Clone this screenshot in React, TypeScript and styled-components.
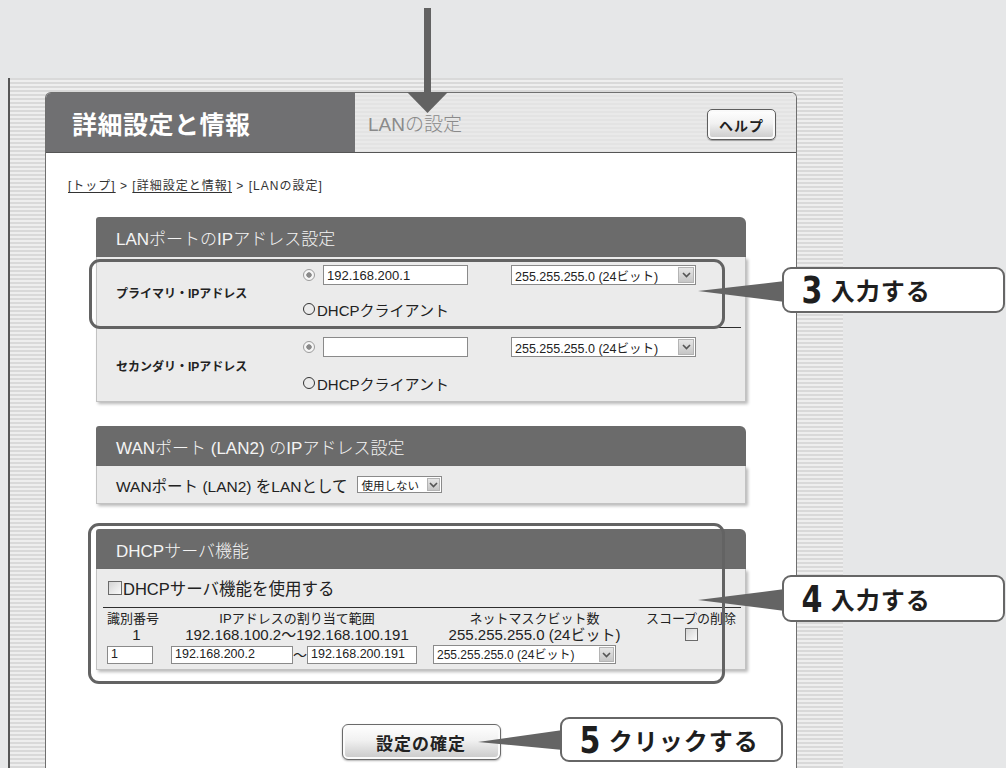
import styled, { createGlobalStyle } from 'styled-components';

const FONT = `'Liberation Sans', 'Noto Sans CJK JP', sans-serif`;

const GlobalStyle = createGlobalStyle`
  html, body {
    margin: 0;
    padding: 0;
  }
  body {
    width: 1006px;
    height: 768px;
    overflow: hidden;
    background: #e6e7e8;
    font-family: ${FONT};
    color: #222;
  }
`;

const Page = styled.div`
  position: relative;
  width: 1006px;
  height: 768px;
  overflow: hidden;
  padding-top: 78px;
  box-sizing: border-box;
`;

const Frame = styled.div`
  margin-left: 8px;
  width: 835px;
  height: 690px;
  box-sizing: border-box;
  border-left: 2px solid #555;
  padding: 14px 0 0 35px;
  background: repeating-linear-gradient(to bottom, #d9d9d9 0 2px, #eeeeee 2px 4px);
`;

const Panel = styled.div`
  width: 752px;
  height: 100%;
  box-sizing: border-box;
  background: #fff;
  border: 1px solid #6f6f6f;
  border-bottom: none;
  border-radius: 6px 6px 0 0;
  display: flex;
  flex-direction: column;
`;

const Header = styled.header`
  display: flex;
  height: 59px;
  border-bottom: 1px solid #555;
`;

const TitleBlock = styled.div`
  width: 309px;
  box-sizing: border-box;
  padding-left: 26px;
  display: flex;
  align-items: center;
  background: #707072;
  border-top-left-radius: 5px;
  color: #fff;
  font-size: 25px;
  font-weight: bold;
  letter-spacing: 0.5px;
`;

const SubBar = styled.div`
  flex: 1;
  display: flex;
  align-items: center;
  justify-content: space-between;
  padding: 0 20px 0 13px;
  border-top-right-radius: 5px;
  background: repeating-linear-gradient(to bottom, #e9e9e9 0 2px, #e3e3e3 2px 4px);
`;

const PageName = styled.span`
  color: #8a8a8a;
  font-size: 19px;
  font-weight: 300;
`;

const HelpButton = styled.button`
  width: 69px;
  height: 31px;
  margin-top: 4px;
  border: 1px solid #5e5e5e;
  border-radius: 5px;
  background: linear-gradient(#ffffff, #f2f2f2 45%, #c9c9c9);
  box-shadow: inset 0 0 0 2px #fafafa, 0 1px 1px rgba(0, 0, 0, 0.3);
  font-family: ${FONT};
  font-size: 14px;
  font-weight: bold;
  letter-spacing: 1px;
  color: #222;
  padding: 0;
`;

const Content = styled.div`
  display: flex;
  flex-direction: column;
`;

const Breadcrumb = styled.div`
  margin-top: 26px;
  padding-left: 22px;
  font-size: 12px;
  line-height: 14px;
  letter-spacing: 1px;
  color: #333;
`;

const Crumb = styled.span`
  text-decoration: underline;
  text-underline-offset: 2px;
`;

const Sections = styled.div`
  display: flex;
  flex-direction: column;
  width: 650px;
  padding-left: 50px;
  margin-top: 24px;
`;

const Section = styled.section<{ $gap?: number }>`
  position: relative;
  width: 650px;
  margin-top: ${({ $gap }) => $gap ?? 0}px;
`;

const SectionHeader = styled.div`
  height: 40px;
  box-sizing: border-box;
  padding-left: 20px;
  display: flex;
  align-items: center;
  background: #6b6b6b;
  border-radius: 3px 6px 0 0;
  color: #f4f4f4;
  font-size: 17px;
  font-weight: 300;
`;

const SectionBody = styled.div`
  background: #ebebeb;
  border: 1px solid #c2c2c2;
  border-top: none;
  box-shadow: 2px 2px 3px rgba(0, 0, 0, 0.28);
`;

const AddressRow = styled.div`
  display: grid;
  grid-template-columns: 206px 1fr;
  padding: 8px 0;
  margin-right: 4px;
  border-bottom: 1px solid #2e2e2e;

  &:last-child {
    border-bottom: none;
    padding-top: 9px;
    padding-bottom: 8px;
  }
`;

const RowLabel = styled.div`
  align-self: center;
  padding-left: 19px;
  font-size: 12px;
  font-weight: bold;
  color: #222;
`;

const RowFields = styled.div<{ $gap: number }>`
  display: flex;
  flex-direction: column;
  gap: ${({ $gap }) => $gap}px;
`;

const FieldLine = styled.div`
  display: flex;
  align-items: center;
  height: 20px;
  font-size: 15px;
`;

const Radio = styled.span<{ $checked?: boolean }>`
  display: inline-block;
  width: 12px;
  height: 12px;
  border-radius: 50%;
  box-sizing: border-box;
  flex: none;
  border: 1px solid ${({ $checked }) => ($checked ? '#9c9c9c' : '#333')};
  background: ${({ $checked }) =>
    $checked ? 'radial-gradient(circle, #8a8a8a 0 2.4px, #f6f6f6 3px)' : 'transparent'};
  margin-right: ${({ $checked }) => ($checked ? 8 : 2)}px;
`;

const TextInput = styled.div<{ $w: number; $h?: number; $size?: number }>`
  width: ${({ $w }) => $w}px;
  height: ${({ $h }) => $h ?? 20}px;
  box-sizing: border-box;
  border: 1px solid #8a8a8a;
  background: #fff;
  padding-left: 3px;
  display: flex;
  align-items: center;
  font-size: ${({ $size }) => $size ?? 13}px;
  color: #222;
  flex: none;
`;

const SelectBox = styled.div<{ $w: number; $h: number; $size: number; $ml?: number }>`
  width: ${({ $w }) => $w}px;
  height: ${({ $h }) => $h}px;
  margin-left: ${({ $ml }) => $ml ?? 0}px;
  box-sizing: border-box;
  border: 1px solid #8a8a8a;
  background: #fff;
  padding-left: 3px;
  display: flex;
  align-items: center;
  justify-content: space-between;
  font-size: ${({ $size }) => $size}px;
  color: #222;
  flex: none;
`;

const SelectArrow = styled.span<{ $s: number }>`
  width: ${({ $s }) => $s}px;
  height: ${({ $s }) => $s}px;
  margin-right: 1px;
  box-sizing: border-box;
  border: 1px solid #b4b4b4;
  background: linear-gradient(#e6e6e6, #c6c6c6);
  display: flex;
  align-items: center;
  justify-content: center;
`;

function Select({ value, w, h = 20, size = 12.5, ml }: { value: string; w: number; h?: number; size?: number; ml?: number }) {
  return (
    <SelectBox $w={w} $h={h} $size={size} $ml={ml}>
      <span>{value}</span>
      <SelectArrow $s={h - 4}>
        <svg width="9" height="6" viewBox="0 0 9 6">
          <polyline points="1,1 4.5,4.6 8,1" fill="none" stroke="#555" strokeWidth="1.6" />
        </svg>
      </SelectArrow>
    </SelectBox>
  );
}

const WanLine = styled.div`
  height: 37px;
  display: flex;
  align-items: center;
  gap: 10px;
  padding-left: 19px;
  font-size: 15.5px;
`;

const CheckLine = styled.div`
  height: 38px;
  margin: 0 4px 0 6px;
  padding-left: 5px;
  display: flex;
  align-items: center;
  gap: 1px;
  border-bottom: 1px solid #2e2e2e;
  font-size: 16.5px;
`;

const CheckBox = styled.span<{ $s: number }>`
  display: inline-block;
  width: ${({ $s }) => $s}px;
  height: ${({ $s }) => $s}px;
  box-sizing: border-box;
  border: 1px solid #6a6a6a;
  background: linear-gradient(135deg, #d4d4d4, #fafafa);
  flex: none;
`;

const ScopeTable = styled.div`
  padding: 3px 0 5px 10px;
  display: flex;
  flex-direction: column;
`;

const ScopeRow = styled.div<{ $h: number; $mt?: number; $size: number }>`
  display: grid;
  grid-template-columns: 59px 262px 213px 100px;
  height: ${({ $h }) => $h}px;
  margin-top: ${({ $mt }) => $mt ?? 0}px;
  align-items: center;
  font-size: ${({ $size }) => $size}px;
  line-height: 1;
`;

const ScopeCell = styled.div<{ $align?: 'left' | 'center' }>`
  display: flex;
  align-items: center;
  justify-content: ${({ $align }) => ($align === 'left' ? 'flex-start' : 'center')};
`;

const RangeCell = styled.div`
  display: flex;
  align-items: center;
  padding-left: 5px;
  font-size: 14px;
`;

const Highlight = styled.div<{ $top: number; $left: number; $w: number; $h: number }>`
  position: absolute;
  top: ${({ $top }) => $top}px;
  left: ${({ $left }) => $left}px;
  width: ${({ $w }) => $w}px;
  height: ${({ $h }) => $h}px;
  box-sizing: border-box;
  border: 3px solid #636363;
  border-radius: 11px;
  pointer-events: none;
`;

const SubmitButton = styled.button`
  align-self: center;
  width: 159px;
  height: 36px;
  margin-top: 54px;
  border: 1px solid #6a6a6a;
  border-radius: 6px;
  background: linear-gradient(#ffffff, #f1f1f1 45%, #c8c8c8);
  box-shadow: inset 0 0 0 2px #fbfbfb, 0 1px 2px rgba(0, 0, 0, 0.3);
  font-family: ${FONT};
  font-size: 17px;
  font-weight: bold;
  letter-spacing: 1px;
  color: #222;
  padding: 0;
`;

const Overlay = styled.svg`
  position: absolute;
  inset: 0;
  pointer-events: none;
`;

const Callout = styled.div<{ $x: number; $y: number; $w: number; $h: number }>`
  position: absolute;
  left: ${({ $x }) => $x}px;
  top: ${({ $y }) => $y}px;
  width: ${({ $w }) => $w}px;
  height: ${({ $h }) => $h}px;
  box-sizing: border-box;
  padding-left: 16px;
  display: flex;
  align-items: center;
  gap: 7px;
  background: #fff;
  border: 2.5px solid #666;
  border-radius: 9px;
  color: #1e1e1e;
`;

const CalloutNum = styled.span`
  font-family: 'DejaVu Sans Condensed', 'Liberation Sans Narrow', sans-serif;
  font-stretch: condensed;
  font-weight: bold;
  font-size: 38px;
  line-height: 1;
  transform: scaleX(0.88);
`;

const CalloutText = styled.span`
  font-family: 'Noto Sans CJK JP', sans-serif;
  font-weight: bold;
  font-size: 24px;
  letter-spacing: 1px;
  line-height: 1;
`;

const MASK = '255.255.255.0 (24ビット)';

export default function App() {
  return (
    <>
      <GlobalStyle />
      <Page>
        <Frame>
          <Panel>
            <Header>
              <TitleBlock>詳細設定と情報</TitleBlock>
              <SubBar>
                <PageName>LANの設定</PageName>
                <HelpButton>ヘルプ</HelpButton>
              </SubBar>
            </Header>

            <Content>
              <Breadcrumb>
                <Crumb>[トップ]</Crumb> &gt; <Crumb>[詳細設定と情報]</Crumb> &gt; [LANの設定]
              </Breadcrumb>

              <Sections>
                <Section>
                  <SectionHeader>LANポートのIPアドレス設定</SectionHeader>
                  <SectionBody>
                    <AddressRow>
                      <RowLabel>プライマリ・IPアドレス</RowLabel>
                      <RowFields $gap={14}>
                        <FieldLine>
                          <Radio $checked />
                          <TextInput $w={145}>192.168.200.1</TextInput>
                          <Select value={MASK} w={185} ml={43} />
                        </FieldLine>
                        <FieldLine>
                          <Radio />
                          DHCPクライアント
                        </FieldLine>
                      </RowFields>
                    </AddressRow>
                    <AddressRow>
                      <RowLabel>セカンダリ・IPアドレス</RowLabel>
                      <RowFields $gap={16}>
                        <FieldLine>
                          <Radio $checked />
                          <TextInput $w={145} />
                          <Select value={MASK} w={185} ml={43} />
                        </FieldLine>
                        <FieldLine>
                          <Radio />
                          DHCPクライアント
                        </FieldLine>
                      </RowFields>
                    </AddressRow>
                  </SectionBody>
                  <Highlight $top={42} $left={-7} $w={636} $h={70} />
                </Section>

                <Section $gap={24}>
                  <SectionHeader>WANポート (LAN2) のIPアドレス設定</SectionHeader>
                  <SectionBody>
                    <WanLine>
                      WANポート (LAN2) をLANとして
                      <Select value="使用しない" w={85} h={17} size={11.5} />
                    </WanLine>
                  </SectionBody>
                </Section>

                <Section $gap={25}>
                  <SectionHeader>DHCPサーバ機能</SectionHeader>
                  <SectionBody>
                    <CheckLine>
                      <CheckBox $s={14} />
                      DHCPサーバ機能を使用する
                    </CheckLine>
                    <ScopeTable>
                      <ScopeRow $h={15} $size={13}>
                        <ScopeCell $align="left">識別番号</ScopeCell>
                        <ScopeCell>IPアドレスの割り当て範囲</ScopeCell>
                        <ScopeCell>ネットマスクビット数</ScopeCell>
                        <ScopeCell>スコープの削除</ScopeCell>
                      </ScopeRow>
                      <ScopeRow $h={17} $size={15}>
                        <ScopeCell>1</ScopeCell>
                        <ScopeCell>192.168.100.2～192.168.100.191</ScopeCell>
                        <ScopeCell>{MASK}</ScopeCell>
                        <ScopeCell>
                          <CheckBox $s={13} />
                        </ScopeCell>
                      </ScopeRow>
                      <ScopeRow $h={19} $mt={2} $size={12.5}>
                        <ScopeCell $align="left">
                          <TextInput $w={46} $h={18} $size={12.5}>1</TextInput>
                        </ScopeCell>
                        <RangeCell>
                          <TextInput $w={122} $h={18} $size={12.5}>192.168.200.2</TextInput>
                          ～
                          <TextInput $w={110} $h={18} $size={12.5}>192.168.200.191</TextInput>
                        </RangeCell>
                        <RangeCell>
                          <Select value={MASK} w={183} h={19} size={12} />
                        </RangeCell>
                        <ScopeCell />
                      </ScopeRow>
                    </ScopeTable>
                  </SectionBody>
                  <Highlight $top={-6} $left={-8} $w={637} $h={161} />
                </Section>

                <SubmitButton>設定の確定</SubmitButton>
              </Sections>
            </Content>
          </Panel>
        </Frame>

        <Overlay width="1006" height="768" viewBox="0 0 1006 768">
          <rect x="424" y="8" width="7" height="86" fill="#626262" />
          <polygon points="407,92 448,92 427.5,113" fill="#626262" />
          <polygon points="698,291 785,281 785,302" fill="#646464" />
          <polygon points="698,600 785,589 785,611" fill="#646464" />
          <polygon points="478,742 563,730 563,750" fill="#646464" />
        </Overlay>

        <Callout $x={782} $y={267} $w={223} $h={46}>
          <CalloutNum>3</CalloutNum>
          <CalloutText>入力する</CalloutText>
        </Callout>
        <Callout $x={782} $y={575} $w={223} $h={47}>
          <CalloutNum>4</CalloutNum>
          <CalloutText>入力する</CalloutText>
        </Callout>
        <Callout $x={560} $y={717} $w={223} $h={45}>
          <CalloutNum>5</CalloutNum>
          <CalloutText>クリックする</CalloutText>
        </Callout>
      </Page>
    </>
  );
}
